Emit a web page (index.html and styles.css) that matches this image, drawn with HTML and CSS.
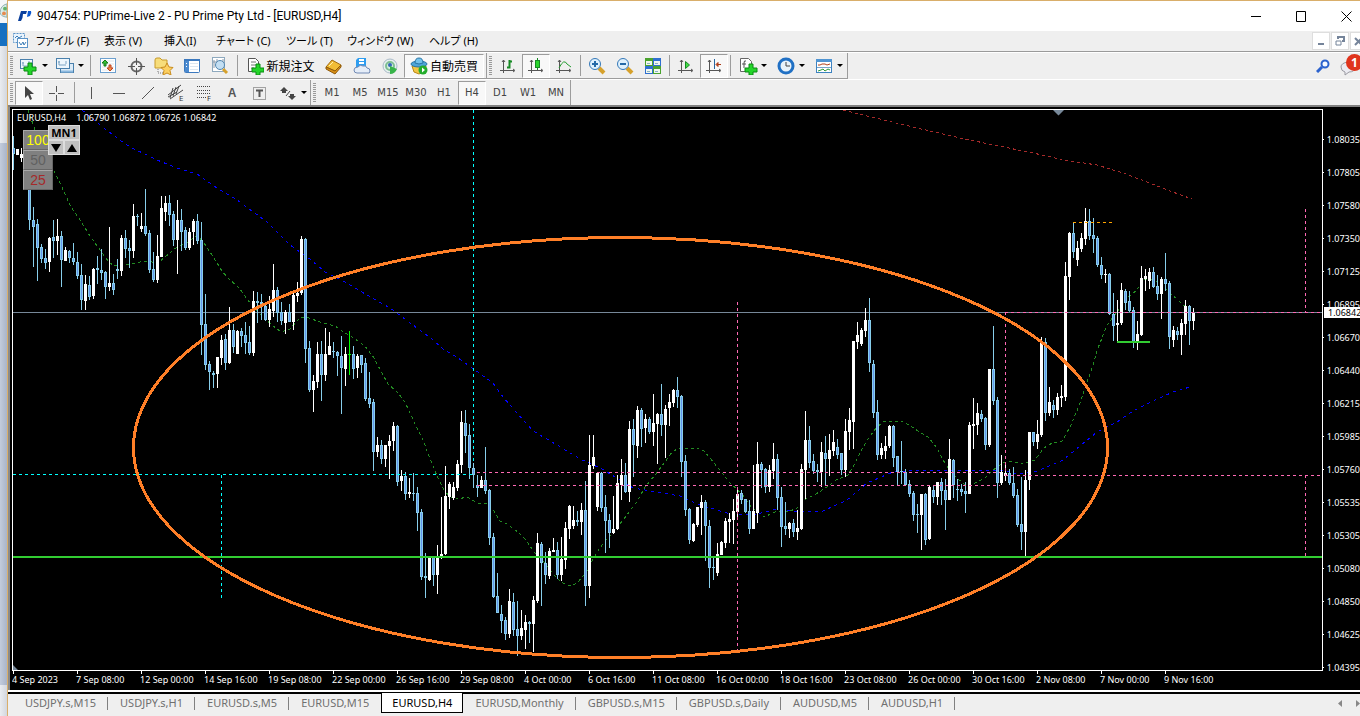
FILE: index.html
```html
<!DOCTYPE html>
<html lang="ja">
<head>
<meta charset="utf-8">
<title>904754: PUPrime-Live 2 - PU Prime Pty Ltd - [EURUSD,H4]</title>
<link rel="stylesheet" href="styles.css">
</head>
<body>
<aside class="rail" aria-hidden="true">
  <svg class="rail-icon" viewBox="0 0 7 24"><path d="M7 4Q0 6 0 13Q0 17 7 18Z" fill="#d9ece9" stroke="#8fb0b0"/><circle cx="5" cy="9" r="2" fill="#63b36a"/><circle cx="4" cy="14" r="2" fill="#e58a50"/></svg>
  <div class="rail-blue"></div>
  <div class="rail-light"></div>
  <div class="rail-slate"></div>
  <div class="rail-light rail-foot"></div>
</aside>
<main class="window">
  <header class="titlebar">
    <svg class="logo" width="14" height="12" viewBox="0 0 14 12"><path d="M3 1H9L8 4H5Q5 8 3 11H0Z" fill="#0a3f9c"/><path d="M10 1H13Q14 3 12 6L9 7Z" fill="#0a57d0"/></svg>
    <h1 class="title">904754: PUPrime-Live 2 - PU Prime Pty Ltd - [EURUSD,H4]</h1>
    <div class="win-controls">
      <button class="win-btn" aria-label="Minimize"><svg width="11" height="11"><path d="M0 5.5H10" stroke="#000"/></svg></button>
      <button class="win-btn" aria-label="Maximize"><svg width="11" height="11"><path d="M.5 .5H9.500V10.500H.5Z" fill="none" stroke="#000"/></svg></button>
      <button class="win-btn" aria-label="Close"><svg width="11" height="11"><path d="M.5 .5L10.500 10.500M10.500 .5L.5 10.500" stroke="#000"/></svg></button>
    </div>
  </header>

  <nav class="menubar">
    <svg class="menu-logo" width="16" height="16"><rect x=".5" y=".5" width="11" height="9" fill="#eaf4fd" stroke="#5b93c7" stroke-dasharray="2 1"/><path d="M2 5l2-2 2 2 3-2" fill="none" stroke="#3f7fb8"/><rect x="4.500" y="5.500" width="10" height="9" fill="#fff" stroke="#5b93c7"/><path d="M6 9l2 3 2-3 1 3 2-3" fill="none" stroke="#3f7fb8"/></svg>
    <div class="menus">
      <button class="menu">ファイル (F)</button><button class="menu">表示 (V)</button><button class="menu">挿入(I)</button><button class="menu">チャート (C)</button><button class="menu">ツール (T)</button><button class="menu">ウィンドウ (W)</button><button class="menu">ヘルプ (H)</button>
    </div>
    <div class="mdi-controls">
      <button class="mdi-btn" aria-label="Minimize chart"><svg width="10" height="10"><path d="M2 8H8" stroke="#75849a" stroke-width="2"/></svg></button>
      <button class="mdi-btn" aria-label="Restore chart"><svg width="10" height="10"><path d="M3 3V1H9V5H7" fill="none" stroke="#75849a" stroke-width="2"/><path d="M1 5H6V9H1Z" fill="#fff" stroke="#75849a"/></svg></button>
      <button class="mdi-btn" aria-label="Close chart"><svg width="10" height="10"><path d="M1 2L8 9M8 2L1 9" stroke="#75849a" stroke-width="2"/></svg></button>
    </div>
  </nav>

  <section class="toolbars">
    <div class="bar bar-main">
      <div class="group">
        <i class="grip"></i>
        <button class="tool drop" aria-label="New chart"><svg width="20" height="18"><rect x="1.500" y="2.500" width="12" height="9" fill="#eef6fc" stroke="#4a80ac"/><path d="M4 5v4M3 6h2M4 9h6M10 4v3" stroke="#7ca4c4"/><path d="M9 6h4v4h4v4h-4v4h-4v-4H5v-4h4z" fill="#24d52a" stroke="#0a8a12"/></svg><b class="caret"></b></button>
        <button class="tool drop" aria-label="Profiles"><svg width="20" height="18"><rect x="5.500" y="6.500" width="13" height="9" fill="#dcebf7" stroke="#4a80ac"/><path d="M6 14.500h12" stroke="#8bb8df" stroke-width="2"/><rect x="1.500" y="1.500" width="13" height="10" fill="#eef6fc" stroke="#4a80ac"/><path d="M4 4v4M3 5h2M4 8h7M11 4v3" stroke="#7ca4c4"/></svg><b class="caret"></b></button>
        <i class="sep"></i>
        <button class="tool" aria-label="Market watch"><svg width="18" height="18"><rect x="1.500" y="1.500" width="15" height="14" fill="#fff" stroke="#6da0cf"/><path d="M3 4h12M3 7h12M3 10h12M3 13h12" stroke="#dfe5ea"/><path d="M6 3l3 3H7v3H5V6H3z" fill="#38c038" stroke="#177d1b"/><path d="M11 14l-3-3h2V8h2v3h2z" fill="#f28a4c" stroke="#c0431c"/></svg></button>
        <button class="tool" aria-label="Data window"><svg width="18" height="18"><circle cx="9.500" cy="9.500" r="5" fill="none" stroke="#666" stroke-width="2"/><path d="M9.500 1v7M9.500 11v7M1 9.500h7M11 9.500h7" stroke="#555"/></svg></button>
        <button class="tool" aria-label="Navigator"><svg width="20" height="18"><path d="M1 3q0-2 2-2h3l2 2h5v8H1z" fill="#f7dd7a" stroke="#c79a2a"/><path d="M4 12v4h7" fill="none" stroke="#777" stroke-dasharray="1 1"/><path d="M13 6l2 4 4 .5-3 3 1 4.500-4-2-4 2 1-4.500-3-3 4-.5z" fill="#fcd062" stroke="#c98d1e"/></svg></button>
        <button class="tool" aria-label="Terminal"><svg width="18" height="18"><rect x="1.500" y="2.500" width="15" height="13" rx="1" fill="#fff" stroke="#3b78bd"/><rect x="2" y="3" width="4" height="12" fill="#4c8bd0"/><path d="M1 3h16" stroke="#3b78bd" stroke-width="2"/><path d="M3 6.500h1M3 9.500h1" stroke="#fff"/><path d="M7 6.500h8M7 9.500h8M7 12.500h8" stroke="#dbe6f0"/></svg></button>
        <button class="tool" aria-label="Strategy tester"><svg width="20" height="19"><rect x="2.500" y="1.500" width="12" height="14" fill="#fff" stroke="#8ea9be"/><path d="M4 4v8M7 3v9M11 5v6M13 3v7M3 6h4" stroke="#8a9aaa"/><circle cx="10" cy="9" r="4.500" fill="#c3dff3" stroke="#5286b0"/><path d="M13 13l4 4" stroke="#d6a12c" stroke-width="3"/></svg></button>
        <i class="sep"></i>
        <button class="tool order"><svg width="18" height="18"><path d="M2.500 1.500h7l3 3v10h-10z" fill="#fff" stroke="#555"/><path d="M5 5h5M5 8h5M5 11h3" stroke="#777"/><path d="M10 7h4v4h4v4h-4v3h-4v-3H6v-4h4z" fill="#24d52a" stroke="#0a8a12"/></svg><span>新規注文</span></button>
        <button class="tool" aria-label="MetaEditor"><svg width="18" height="18"><path d="M1 10L7 3l9 5-6 6z" fill="#f2bd36" stroke="#a26a0e"/><path d="M1 10l9 4 6-6v2l-6 7-9-5z" fill="#d98f15" stroke="#8f5a0a"/><path d="M4 9l4-4" stroke="#fff0b0"/></svg></button>
        <button class="tool" aria-label="Cloud"><svg width="18" height="18"><path d="M3 3l2-2h8v10H3z" fill="#2e9df0"/><path d="M6 3h5M6 6h5" stroke="#fff" stroke-width="2"/><path d="M4 16q-3 0-3-3t4-3q2-3 5-1 3-1 4 2 3 0 3 3t-3 2z" fill="#e5edf8" stroke="#7189b4"/></svg></button>
        <button class="tool" aria-label="Signals"><svg width="18" height="18"><circle cx="9" cy="9" r="7" fill="#e6f1ee" stroke="#a9b9c8" stroke-width="1"/><circle cx="9" cy="9" r="4" fill="#d5eee0" stroke="#7fbf94" stroke-width="2"/><circle cx="9" cy="8" r="2" fill="#3366bb"/><path d="M9 9v8q5 0 7-5z" fill="#38b44a"/></svg></button>
        <button class="tool auto pressed" aria-pressed="true"><svg width="18" height="18"><path d="M2 9l2 6 5 2 6-3 1-5z" fill="#f2c545" stroke="#b98716"/><ellipse cx="9" cy="7" rx="8" ry="3" fill="#4ea4d8" stroke="#2875a5"/><path d="M5 6q0-5 4-5t4 5q-4 2-8 0z" fill="#74c2ec" stroke="#2875a5"/><circle cx="13" cy="13" r="4.500" fill="#23ad2c"/><path d="M12 10.500v5l3-2.500z" fill="#fff"/></svg><span>自動売買</span></button>
      </div>
      <div class="group group-chart">
        <i class="grip"></i>
        <button class="tool" aria-label="Bar chart"><svg width="18" height="18"><path d="M4.500 3v13M1 13.500h14M3 5l1.500-2L6 5M14 12l2 1.500-2 1.500" fill="none" stroke="#555"/><path d="M8 10.500h2.500V3M10 4.500h3" fill="none" stroke="#168a24" stroke-width="2"/></svg></button>
        <button class="tool pressed" aria-label="Candlesticks"><svg width="18" height="18"><path d="M4.500 3v13M1 13.500h14M3 5l1.500-2L6 5M14 12l2 1.500-2 1.500" fill="none" stroke="#555"/><path d="M10.500 1v12" stroke="#168a24"/><rect x="8.500" y="3.500" width="4" height="7" fill="#29d52c" stroke="#168a24"/></svg></button>
        <button class="tool" aria-label="Line chart"><svg width="18" height="18"><path d="M4.500 3v13M1 13.500h14M3 5l1.500-2L6 5M14 12l2 1.500-2 1.500" fill="none" stroke="#555"/><path d="M4 11q5-10 8-4l4 3" fill="none" stroke="#239b2f"/></svg></button>
        <i class="sep"></i>
        <button class="tool" aria-label="Zoom in"><svg width="18" height="18"><path d="M11 11l5 5" stroke="#d6a12c" stroke-width="4"/><circle cx="7" cy="7" r="5.500" fill="#dff1fd" stroke="#3478b8"/><path d="M4 7h6M7 4v6" stroke="#246aa8" stroke-width="2"/></svg></button>
        <button class="tool" aria-label="Zoom out"><svg width="18" height="18"><path d="M11 11l5 5" stroke="#d6a12c" stroke-width="4"/><circle cx="7" cy="7" r="5.500" fill="#dff1fd" stroke="#3478b8"/><path d="M4 7h6" stroke="#246aa8" stroke-width="2"/></svg></button>
        <button class="tool" aria-label="Tile windows"><svg width="18" height="18"><path d="M1 1h8v8H1zM9 9h8v8H9z" fill="#4aa32e"/><path d="M9 1h8v8H9zM1 9h8v8H1z" fill="#2f6fd0"/><path d="M2 4h6v4H2zM10 4h6v4h-6zM2 12h6v4H2zM10 12h6v4h-6z" fill="#f2f8ee"/><path d="M3 6.500h3M11 6.500h3M3 14.500h3M11 14.500h3" stroke="#8ab2c2"/></svg></button>
        <i class="sep"></i>
        <button class="tool" aria-label="Auto scroll"><svg width="18" height="18"><path d="M4.500 3v13M1 13.500h14M3 5l1.500-2L6 5M14 12l2 1.500-2 1.500" fill="none" stroke="#555"/><path d="M8.500 4.500v7l4-3.500z" fill="#42dc45" stroke="#168a24"/></svg></button>
        <button class="tool pressed" aria-label="Chart shift"><svg width="18" height="18"><path d="M4.500 3v13M1 13.500h14M3 5l1.500-2L6 5M14 12l2 1.500-2 1.500" fill="none" stroke="#555"/><path d="M9.500 2v10" stroke="#2866a0"/><path d="M16 7.500h-3M13 5.500l-2 2 2 2z" fill="#c4481c" stroke="#a83816"/></svg></button>
        <i class="sep"></i>
        <button class="tool drop" aria-label="Indicators"><svg width="20" height="18"><path d="M2.500 1.500h8l3 3v10h-11z" fill="#fff" stroke="#666"/><path d="M8 4q-2-1-2 2v5M4 7h4" fill="none" stroke="#555"/><path d="M11 7h4v4h4v4h-4v3h-4v-3H7v-4h4z" fill="#24d52a" stroke="#0a8a12"/></svg><b class="caret"></b></button>
        <button class="tool drop" aria-label="Periods"><svg width="20" height="18"><circle cx="10" cy="9" r="7" fill="#e9f3fb" stroke="#2070c4" stroke-width="3"/><path d="M10 5v4h4" fill="none" stroke="#444"/></svg><b class="caret"></b></button>
        <button class="tool drop" aria-label="Templates"><svg width="20" height="18"><rect x="2.500" y="2.500" width="15" height="13" fill="#fff" stroke="#3d82c0"/><path d="M2 3.500h16" stroke="#4f94d2" stroke-width="3"/><path d="M4 8h2l2-1h3l2 1 3-1" fill="none" stroke="#b0431c"/><path d="M3 10.500h14" stroke="#76a5cc"/><path d="M4 14l3-1 2-1 2 2 3-2 2 1" fill="none" stroke="#2f9a38"/></svg><b class="caret"></b></button>
      </div>
      <div class="status">
        <button class="status-btn" aria-label="Search"><svg width="14" height="14"><circle cx="9" cy="5" r="3.500" fill="#f6faff" stroke="#2b62ce" stroke-width="2"/><path d="M6 8l-5 5" stroke="#2b62ce" stroke-width="3"/></svg></button>
        <button class="status-btn note" aria-label="Messages"><svg width="16" height="16"><path d="M8 2q7 0 7 5t-6 5l-4 3v-3q-4-1-4-5t7-5z" fill="#ececf2" stroke="#9a9aa2"/></svg><span class="badge">1</span></button>
      </div>
    </div>
    <div class="bar bar-sub">
      <div class="group">
        <i class="grip"></i>
        <button class="tool pressed" aria-label="Cursor"><svg width="18" height="18"><path d="M5 2v12l3-3 2 5 2-1-2-5h4z" fill="#444"/></svg></button>
        <button class="tool" aria-label="Crosshair"><svg width="18" height="18"><path d="M8.500 2v6M8.500 11v6M1 9.500h6M10 9.500h6" stroke="#555"/></svg></button>
        <i class="sep"></i>
        <button class="tool" aria-label="Vertical line"><svg width="18" height="18"><path d="M8.500 3v12" stroke="#555"/></svg></button>
        <button class="tool" aria-label="Horizontal line"><svg width="18" height="18"><path d="M2 9.500h12" stroke="#555"/></svg></button>
        <button class="tool" aria-label="Trendline"><svg width="18" height="18"><path d="M3 15L15 3" stroke="#555"/></svg></button>
        <button class="tool" aria-label="Channel"><svg width="18" height="18"><path d="M1 11L14 1M3 15L16 6M3 14l3-10M6 12l3-9M9 10l3-8M1 13l9-5" stroke="#444"/><text x="12" y="17" class="mini">E</text></svg></button>
        <button class="tool" aria-label="Fibonacci"><svg width="18" height="18"><path d="M2 2.500h13M2 6.500h13M2 9.500h13M2 13.500h9" stroke="#444" stroke-dasharray="1 1"/><text x="12" y="17" class="mini">F</text></svg></button>
        <button class="tool letter" aria-label="Text">A</button>
        <button class="tool" aria-label="Text label"><svg width="18" height="18"><rect x="2.500" y="3.500" width="12" height="12" fill="none" stroke="#555" stroke-dasharray="1 1"/><path d="M5 6.500h7M8.500 6v7" stroke="#555" stroke-width="2"/></svg></button>
        <button class="tool drop" aria-label="Arrows"><svg width="20" height="18"><path d="M6 3l4 4-2 0v2H4V7H2zM14 16l-4-4h2V10h4v2h2z" fill="#444"/><path d="M8 12l4-5" stroke="#444"/></svg><b class="caret"></b></button>
      </div>
      <div class="group">
        <i class="grip"></i>
        <button class="tool tf">M1</button><button class="tool tf">M5</button><button class="tool tf">M15</button><button class="tool tf">M30</button><button class="tool tf">H1</button><button class="tool tf pressed" aria-pressed="true">H4</button><button class="tool tf">D1</button><button class="tool tf">W1</button><button class="tool tf">MN</button>
      </div>
    </div>
  </section>

  <section class="chart">
    <div class="plot">
      <svg id="plot" viewBox="13 110 1309 560" preserveAspectRatio="none" role="img" aria-label="EURUSD H4">
        <g shape-rendering="crispEdges" fill="none">
          <path class="bid" d="M13 312.500H1322"/>
          <g class="ma">
            <polyline class="ma-green" points="28,110 35,130 53,169 60,183 71,207 80,220 90,236 100,250 109,262 114,266 126,265 135,263 146,261 158,263 165,257 177,247 188,242 196,236 202,240 212,255 222,271 228,278 240,289 250,303 263,317 272,325 281,332 290,329 300,318 306,317 320,322 335,326 345,333 355,339 365,346 374,358 383,375 388,384 398,393 405,402 416,426 423,440 429,456 437,476 445,492 452,498 458,499 467,497 478,503 487,504 492,508 500,521 507,524 518,532 526,540 534,552 545,563 553,574 561,582 570,586 577,583 586,573 592,561 599,549 607,539 615,530 627,515 638,500 645,487 655,475 665,462 672,452 679,448 688,449 697,448 704,451 710,458 718,468 730,483 743,495 751,507 760,514 765,517 772,513 778,511 788,512 797,508 806,499 816,494 827,487 836,480 848,475 855,463 862,449 868,439 877,427 883,422 901,421 909,425 918,431 928,437 937,448 943,460 950,471 957,478 965,485 975,483 985,478 993,470 1003,463 1012,461 1021,464 1035,460 1044,448 1052,443 1062,441 1070,427 1079,406 1085,388 1093,365 1098,348 1102,338 1107,325 1117,312 1127,298 1137,290 1143,280 1152,279 1162,285 1170,293 1177,299 1183,305 1194,308"/>
            <polyline class="ma-blue" points="82,110 100,125 117,138 130,147 157,160 177,168 197,174 217,188 237,200 267,222 290,245 310,259 325,272 343,281 367,295 390,308 413,325 433,340 443,349 458,358 475,370 493,383 503,397 517,413 533,431 557,445 580,459 600,468 617,478 633,488 657,492 680,496 700,505 717,510 730,514 753,515 777,509 800,512 823,511 847,500 867,483 893,472 920,470 987,470 1003,471 1020,474 1037,471 1063,460 1080,446 1097,432 1117,422 1133,411 1153,401 1173,392 1190,387"/>
            <polyline class="ma-red" points="843,110 900,124 960,138 1033,153 1064,160 1097,165 1123,173 1147,182 1170,191 1192,199"/>
          </g>
          <g id="candles"></g>
          <path class="dash aqua" d="M13 474.500H473M473.500 110V464M221.500 475V598"/>
          <path class="dash pink" d="M477 472.500H1000M477 485.500H1000M737.500 302V472M737.500 487V655M1005.500 312V475M1005 312.500H1322M1005 475.500H1322M1305.500 209V312M1305.500 475V557"/>
          <path class="dash gold" d="M1073 222.500H1112"/>
          <path class="level" d="M13 557H1322M1117 342H1150"/>
          <ellipse class="ring" cx="620.500" cy="447.500" rx="487" ry="210"/>
        </g>
        <path class="mark" d="M1053 110H1064L1058.500 115.500ZM13 665L18 670H13Z"/>
      </svg>
      <p class="quote"><span>EURUSD,H4</span><span>1.06790 1.06872 1.06726 1.06842</span></p>
      <div class="levels">
        <button class="lvl lvl-100">100</button><button class="lvl lvl-50">50</button><button class="lvl lvl-25">25</button>
      </div>
      <div class="period">
        <button class="pd-name">MN1</button><button class="pd-arrow" aria-label="Down"><svg width="10" height="8"><path d="M0 0H10L5 8Z"/></svg></button><button class="pd-arrow" aria-label="Up"><svg width="10" height="8"><path d="M0 8H10L5 0Z"/></svg></button>
      </div>
    </div>
    <ol class="prices">
      <li>1.08035</li><li>1.07805</li><li>1.07580</li><li>1.07350</li><li>1.07125</li><li>1.06895</li><li>1.06670</li><li>1.06440</li><li>1.06215</li><li>1.05985</li><li>1.05760</li><li>1.05535</li><li>1.05305</li><li>1.05080</li><li>1.04850</li><li>1.04625</li><li>1.04395</li>
    </ol>
    <span class="price-now">1.06842</span>
    <ol class="times">
      <li>4 Sep 2023</li><li>7 Sep 08:00</li><li>12 Sep 00:00</li><li>14 Sep 16:00</li><li>19 Sep 08:00</li><li>22 Sep 00:00</li><li>26 Sep 16:00</li><li>29 Sep 08:00</li><li>4 Oct 00:00</li><li>6 Oct 16:00</li><li>11 Oct 08:00</li><li>16 Oct 00:00</li><li>18 Oct 16:00</li><li>23 Oct 08:00</li><li>26 Oct 00:00</li><li>30 Oct 16:00</li><li>2 Nov 08:00</li><li>7 Nov 00:00</li><li>9 Nov 16:00</li>
    </ol>
  </section>

  <nav class="tabs">
    <button class="tab">USDJPY.s,M15</button><button class="tab">USDJPY.s,H1</button><button class="tab">EURUSD.s,M5</button><button class="tab">EURUSD,M15</button><button class="tab active" aria-current="page">EURUSD,H4</button><button class="tab">EURUSD,Monthly</button><button class="tab">GBPUSD.s,M15</button><button class="tab">GBPUSD.s,Daily</button><button class="tab">AUDUSD,M5</button><button class="tab">AUDUSD,H1</button>
    <div class="tab-scroll">
      <button class="scroll-btn" aria-label="Scroll left"><svg width="4" height="7"><path d="M4 0V7L0 3.500Z" fill="#888"/></svg></button>
      <button class="scroll-btn" aria-label="Scroll right"><svg width="4" height="7"><path d="M0 0V7L4 3.500Z" fill="#888"/></svg></button>
    </div>
  </nav>
</main>
<script src="chart.js"></script>
</body>
</html>
```

FILE: styles.css
```css
* { box-sizing: border-box; }
html, body { height: 100%; margin: 0; overflow: hidden; }
body { display: flex; background: #efefef; color: #000; font-family: "Noto Sans", "Noto Sans CJK JP", sans-serif; font-size: 12px; }
button { margin: 0; padding: 0; border: 0; background: none; color: inherit; font: inherit; }
svg { display: block; flex: none; }
ol { margin: 0; padding: 0; list-style: none; }

.rail { display: flex; flex-direction: column; width: 8px; border-right: 1px solid #d9ae6a; background: #f4f6f8; }
.rail-icon { width: 7px; height: 23px; }
.rail-blue { height: 23px; background: #1670c1; }
.rail-light { height: 97px; background: linear-gradient(90deg, #eaecf0, #d3d7de); }
.rail-slate { flex: 1; background: linear-gradient(90deg, #c3ccdc, #a9b4c8); }
.rail-foot { height: 31px; }

.window { flex: 1; min-width: 0; display: flex; flex-direction: column; border-top: 1px solid #d9ae6a; }

.titlebar { display: flex; align-items: center; height: 30px; padding-left: 10px; background: #fff; }
.title { flex: 1; margin: 0 0 0 5px; font: 12px/20px Roboto, sans-serif; white-space: nowrap; }
.win-controls { display: flex; margin-right: -9px; }
.win-btn { display: grid; place-items: center; width: 45px; height: 28px; }

.menubar { display: flex; align-items: center; height: 21px; border-bottom: 1px solid #9a9a9a; padding-left: 5px; background: #efefef; }
.menus { display: grid; grid-template-columns: 68px 60px 52px 70px 61px 82px 60px; flex: 1; margin-left: 7px; }
.menu { text-align: left; white-space: nowrap; font-family: "Noto Sans", "Noto Sans CJK JP", sans-serif; font-size: 11px; line-height: 18px; font-feature-settings: "palt"; }
.mdi-controls { display: flex; gap: 1px; margin-right: -8px; }
.mdi-btn { display: grid; place-items: center; width: 18px; height: 18px; border: 1px solid #dedede; background: #fff; }

.toolbars { border-top: 1px solid #fff; border-bottom: 2px solid #808080; background: #efefef; }
.bar { display: flex; }
.bar-main { height: 27px; border-bottom: 1px solid #fff; }
.bar-sub { height: 25px; }
.bar-main .group { border-bottom: 1px solid #9c9c9c; }
.group { display: flex; align-items: center; border-right: 1px solid #9c9c9c; }
.grip { width: 3px; height: 20px; margin: 0 2px; background: repeating-linear-gradient(#9a9a9a 0 1px, #efefef 1px 2px); }
.sep { width: 1px; height: 21px; margin: 0 3px; background: #9c9c9c; }
.group-chart .sep { margin: 0 2px; }
.tool { display: flex; align-items: center; justify-content: center; width: 28px; height: 24px; white-space: nowrap; color: #000; }
.drop { width: 36px; gap: 3px; }
.group-chart .drop { width: 38px; }
.caret { border: 3px solid transparent; border-top-color: #000; border-bottom: 0; }
.order { width: 79px; gap: 2px; }
.auto { width: 80px; gap: 2px; margin-right: 2px; }
.pressed { border: 1px solid #fff; border-top-color: #9c9c9c; border-left-color: #9c9c9c; background: #f8f8f8; }
.tf { font: 10px "DejaVu Sans", sans-serif; color: #444; }
.letter { font: bold 12px "Liberation Sans", sans-serif; color: #555; }
.mini { font: 7px "DejaVu Sans", sans-serif; fill: #333; }
.status { display: flex; align-items: center; gap: 10px; margin-left: auto; margin-right: -2px; }
.status-btn { position: relative; }
.note { width: 22px; padding-top: 4px; }
.badge { position: absolute; left: 6px; top: -2px; width: 17px; height: 17px; border-radius: 50%; background: #e0341c; color: #fff; font: bold 12px/17px "Noto Sans", sans-serif; text-align: center; }

.chart { position: relative; flex: 1; min-height: 0; display: grid; grid-template-columns: 1fr 37px; grid-template-rows: 1fr 19px; padding: 2px 0 0 2px; border-left: 2px solid #8a8a8a; background: #000; color: #fff; font: 9px/12px "Noto Sans", sans-serif; }
.plot { position: relative; min-width: 0; min-height: 0; border: 1px solid #fff; }
#plot { width: 100%; height: 100%; }
.bid { stroke: #778899; }
.ma { stroke-dasharray: 3 3; }
.ma-green { stroke: #228b22; }
.ma-blue { stroke: #0000ff; stroke-dasharray: 3 4; }
.ma-red { stroke: #a52a2a; }
.dash { stroke-dasharray: 3 3; }
.aqua { stroke: #00ffff; }
.pink { stroke: #ff69b4; }
.gold { stroke: #ffa500; }
.level { stroke: #32cd32; stroke-width: 2; }
.ring { stroke: #ff7f27; stroke-width: 3; }
.mark { fill: #778899; }
.up { fill: #fff; }
.down { fill: #87ceeb; }
.core { fill: #6495ed; }
.flat { fill: #0f0; }

.quote { position: absolute; left: 4px; top: 2px; display: flex; gap: 10px; margin: 0; white-space: nowrap; }
.levels { position: absolute; left: 10px; top: 20px; display: grid; }
.lvl { width: 30px; height: 20px; border: 1px solid #666; border-top-color: #a8a8a8; border-left-color: #a8a8a8; background: #808080; font: 14px/16px "Liberation Sans", sans-serif; }
.lvl-100 { color: #ff0; }
.lvl-50 { color: #606060; }
.lvl-25 { color: #a52a2a; }
.period { position: absolute; left: 35px; top: 15px; display: grid; grid-template-columns: 16px 16px; color: #000; }
.pd-name { grid-column: span 2; height: 15px; border: 1px solid #ddd; background: #c0c0c0; font: bold 11px/13px "Noto Sans", sans-serif; }
.pd-arrow { display: grid; place-items: center; height: 15px; border: 1px solid #ddd; background: #c0c0c0; }

.prices { grid-column: 2; grid-row: 1 / span 2; display: flex; flex-direction: column; padding: 14px 0 6px; overflow: hidden; }
.prices li { flex: 1; display: flex; align-items: center; gap: 3px; }
.prices li::before { content: ""; width: 2px; height: 1px; background: #fff; }
.price-now { position: absolute; right: 0; top: 200px; width: 36px; padding-left: 4px; background: #fff; color: #000; line-height: 11px; overflow: hidden; }
.times { grid-column: 1; grid-row: 2; display: flex; overflow: hidden; }
.times li { flex: 0 0 64px; white-space: nowrap; }
.times li::before { content: ""; display: block; width: 1px; height: 3px; margin-left: 1px; background: #fff; }

.tabs { display: flex; height: 26px; border-top: 2px solid #fff; box-shadow: inset 0 2px 0 #000; padding: 1px 0 3px 5px; background: #efefef; color: #707070; }
.tab { position: relative; height: 20px; padding: 0 12px; font: 11px/18px "Noto Sans", sans-serif; white-space: nowrap; }
.tab:not(.active)::after { content: ""; position: absolute; right: 0; top: 4px; width: 1px; height: 13px; background: #808080; }
.tab.active { padding: 0 10px; background: #fff; color: #000; border: 1px solid #000; border-top: 0; }
.tab:has(+ .active)::after { display: none; }
.tab-scroll { display: flex; align-items: center; gap: 14px; margin-left: auto; }
```

FILE: chart.js
```javascript
// One bar every 4 units: high, body top, body bottom, low, kind (u = up, d = down, f = flat)
const bars = `
136 148 154 170 d,149 149 155 155 u,148 154 158 162 u,149 151 156 160 u,150 165 220 230 d,207 220 227 267 d,
219 224 248 281 d,244 247 259 263 d,249 258 263 269 d,237 238 262 272 u,220 237 241 258 d,219 236 241 255 u,
231 236 260 287 d,247 250 261 261 u,250 251 258 263 d,243 258 262 265 d,252 262 276 279 d,264 275 300 310 d,
275 284 301 310 u,276 285 297 300 d,268 269 296 299 u,256 268 270 284 d,249 270 273 280 d,271 272 287 299 d,
227 283 287 291 u,274 283 290 295 d,259 269 271 279 d,235 238 271 276 u,230 238 249 258 d,240 248 251 268 d,
204 216 251 258 u,214 216 217 226 d,213 226 229 232 u,189 226 234 236 d,230 233 270 273 d,252 269 280 282 d,
235 256 280 283 u,196 208 257 257 u,196 203 212 221 u,195 203 215 226 d,211 214 240 246 d,200 220 240 274 u,
209 220 232 251 d,227 230 248 250 d,228 232 248 250 u,219 221 232 245 u,214 221 241 244 d,222 240 325 355 d,
294 324 365 370 d,361 364 372 390 d,371 373 375 388 d,357 357 374 388 u,335 340 358 365 u,334 339 363 370 d,
307 330 363 364 u,324 330 347 353 d,330 331 354 354 u,328 331 336 347 d,322 335 343 354 d,326 342 353 355 d,
291 301 353 356 u,292 301 303 323 d,294 302 304 320 d,302 306 320 321 d,296 309 320 327 u,264 290 311 317 u,
287 290 313 322 d,302 312 321 325 d,310 312 323 334 u,304 312 322 322 d,293 295 322 330 u,282 293 296 302 u,
236 239 293 295 u,238 239 349 363 d,341 348 390 392 d,375 381 390 412 u,342 354 382 388 u,341 354 375 401 d,
328 354 375 381 u,332 346 355 355 u,342 351 352 358 d,351 352 356 376 d,336 356 368 414 d,347 354 369 386 u,
331 354 355 375 f,346 354 369 379 d,354 356 368 378 u,355 355 365 373 d,358 363 399 401 d,372 398 404 408 d,
399 402 452 471 d,437 445 452 457 u,440 445 459 464 d,445 445 459 467 u,435 441 446 479 u,422 426 441 451 u,
425 426 482 486 d,470 476 481 491 u,472 476 494 500 d,478 492 494 498 u,473 493 494 501 d,487 493 513 531 d,
509 512 577 580 d,553 576 578 598 d,557 557 580 581 u,557 557 575 586 d,545 557 575 594 u,497 554 556 559 u,
466 496 554 555 u,482 484 497 509 u,482 487 498 500 u,460 464 488 491 u,411 422 465 473 u,410 423 436 453 d,
424 435 468 479 d,463 468 475 488 d,475 485 488 497 d,476 480 488 488 u,447 480 491 494 d,489 490 538 545 d,
533 537 597 598 d,573 596 613 613 d,605 614 621 633 d,617 620 634 640 d,589 601 634 638 u,593 602 630 636 d,
601 629 636 656 d,610 628 636 640 u,615 622 630 649 u,621 622 624 643 d,596 600 624 652 u,533 543 601 603 u,
542 544 563 606 d,552 563 575 584 d,548 551 576 579 u,538 550 552 552 u,542 550 575 579 d,537 559 575 581 u,
522 528 560 569 u,505 506 529 539 u,506 520 526 529 u,511 520 522 526 d,503 510 522 535 u,481 510 586 606 d,
435 465 586 598 u,435 457 466 469 u,472 473 507 511 u,472 473 508 512 d,495 507 521 553 d,514 520 533 548 d,
496 529 533 534 u,475 483 529 530 u,459 475 485 500 u,463 475 492 493 d,421 429 492 502 u,419 429 445 477 d,
406 410 446 458 u,408 410 429 447 d,414 419 428 443 u,417 419 432 434 d,394 423 432 446 u,413 414 424 464 u,
384 414 425 436 d,405 409 425 458 u,394 402 408 426 u,389 390 403 407 u,377 390 397 408 d,395 396 462 477 d,
455 461 510 516 d,508 509 540 544 d,523 524 541 542 u,507 507 525 527 u,495 502 508 535 u,500 502 526 561 d,
520 526 568 588 d,557 567 568 580 d,543 554 573 576 u,541 542 555 555 u,518 521 543 548 u,513 519 522 543 u,
499 511 520 544 u,489 494 512 518 u,490 493 500 504 d,499 499 512 513 d,500 511 529 534 d,465 511 529 529 u,
442 464 513 523 u,462 464 470 488 d,468 469 487 493 d,465 470 487 492 u,443 459 471 479 u,454 459 498 510 d,
487 497 527 547 d,502 526 529 535 d,522 523 529 538 u,519 523 532 537 d,510 528 532 540 u,464 469 529 530 u,
411 440 470 499 u,426 440 463 468 d,454 461 471 474 d,464 470 472 482 d,442 452 472 487 u,436 453 459 486 d,
434 450 459 476 u,430 442 451 456 u,439 447 455 459 d,453 453 470 475 d,419 431 470 477 u,408 420 432 450 u,
341 341 422 449 u,322 335 342 349 u,328 330 344 346 u,308 320 331 337 u,298 320 363 372 d,360 364 413 418 d,
400 412 455 460 d,443 448 455 459 u,436 446 451 459 u,425 426 446 448 u,425 426 458 467 d,456 456 472 486 d,
441 471 472 484 d,469 472 485 486 d,480 484 494 497 d,491 493 515 521 d,504 514 515 533 d,494 494 515 550 u,
493 494 540 545 d,486 487 539 540 u,485 490 497 503 d,482 482 497 505 u,478 482 491 505 d,479 490 500 530 d,
439 459 500 500 u,459 460 485 498 d,479 489 490 501 d,484 489 492 496 d,482 491 494 513 d,422 425 494 494 u,
398 424 426 449 u,403 413 425 435 u,410 414 419 422 d,417 418 445 450 d,369 369 445 447 u,326 369 401 405 d,
397 400 483 498 d,455 472 483 485 u,463 473 476 481 u,469 473 483 485 d,467 483 496 498 d,489 495 525 527 d,
477 524 532 550 d,470 480 532 556 u,432 432 480 490 u,432 432 442 446 d,420 434 442 449 u,337 342 435 437 u,
338 342 413 421 d,387 402 413 416 u,400 405 410 418 d,393 397 410 415 u,385 396 398 407 u,262 276 397 401 u,
232 233 277 300 u,222 233 252 258 d,241 248 260 266 u,233 238 249 252 u,208 221 239 245 u,209 221 236 240 d,
218 235 239 253 d,236 238 265 267 d,257 265 275 279 d,269 274 275 283 u,273 274 314 315 d,293 314 326 341 d,
300 323 325 342 u,283 290 323 325 u,289 291 303 310 d,291 301 311 312 d,307 310 342 348 d,321 334 342 350 u,
266 278 335 336 u,269 276 279 291 u,268 272 281 289 u,267 272 287 288 d,275 286 294 300 d,277 279 294 319 u,
253 279 284 291 d,281 283 337 349 d,326 330 340 347 u,327 331 335 340 d,319 323 335 355 u,300 306 324 335 u,
305 306 321 345 d,308 313 321 330 u`.split(",").map(row => row.trim().split(" "));

const kinds = { u: "up", d: "down", f: "flat" };
const layer = document.getElementById("candles");

function rect(x, top, width, bottom, name) {
  const el = document.createElementNS("http://www.w3.org/2000/svg", "rect");
  el.setAttribute("x", x);
  el.setAttribute("y", top);
  el.setAttribute("width", width);
  el.setAttribute("height", Math.max(1, bottom - top));
  el.setAttribute("class", name);
  layer.append(el);
}

bars.forEach(([high, top, bottom, low, kind], i) => {
  const x = 13 + i * 4;
  rect(x, +high, 1, +low, kinds[kind]);
  rect(x - 1, +top, 3, +bottom, kinds[kind]);
  if (kind === "d" && bottom - top > 2) rect(x, +top + 1, 1, bottom - 1, "core");
});
```
